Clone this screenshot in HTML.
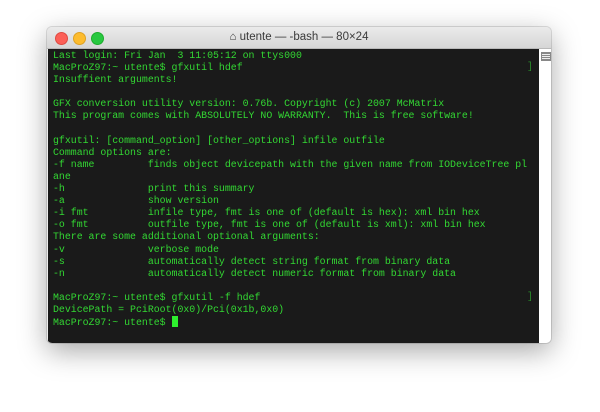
<!DOCTYPE html>
<html><head><style>
body{margin:0;width:600px;height:412px;background:#fff;position:relative;overflow:hidden;font-family:"Liberation Sans",sans-serif}
.win{position:absolute;left:47px;top:27px;width:504px;height:316px;border-radius:5px;background:#ececec;box-shadow:0 8px 28px rgba(0,0,0,.35),0 0 0 1px rgba(0,0,0,.12);overflow:hidden}
.title{height:21px;background:linear-gradient(#ebebeb,#d6d6d6);border-bottom:1px solid #b9b9b9;text-align:center;font-size:11.5px;color:#3a3a3a;line-height:21px}
.dot{position:absolute;top:5px;width:11px;height:11px;border-radius:50%}
.term{position:absolute;left:1px;top:22px;width:491px;height:294px;background:#1a1a1a}
.sb{position:absolute;left:492px;top:22px;width:12px;height:294px;background:#fff}
pre{margin:0;position:absolute;left:5px;top:1px;font-family:"Liberation Mono",monospace;font-size:9.9px;line-height:12.1px;color:#33d833}
.cur{display:inline-block;width:6px;height:11px;background:#2ef02e;vertical-align:-2px}
.br{position:absolute;right:6px;color:#2a8a2a;font-family:"Liberation Mono",monospace;font-size:10px}
</style></head><body>
<div class="win">
<div class="title">⌂ utente — -bash — 80×24</div>
<div class="dot" style="left:8px;background:#fc5f57;border:0.5px solid #de4a41"></div>
<div class="dot" style="left:26px;background:#fdbc2e;border:0.5px solid #dea123"></div>
<div class="dot" style="left:44px;background:#28c840;border:0.5px solid #1dac2c"></div>
<div class="term">
<pre>Last login: Fri Jan  3 11:05:12 on ttys000
MacProZ97:~ utente$ gfxutil hdef
Insuffient arguments!

GFX conversion utility version: 0.76b. Copyright (c) 2007 McMatrix
This program comes with ABSOLUTELY NO WARRANTY.  This is free software!

gfxutil: [command_option] [other_options] infile outfile
Command options are:
-f name         finds object devicepath with the given name from IODeviceTree pl
ane
-h              print this summary
-a              show version
-i fmt          infile type, fmt is one of (default is hex): xml bin hex
-o fmt          outfile type, fmt is one of (default is xml): xml bin hex
There are some additional optional arguments:
-v              verbose mode
-s              automatically detect string format from binary data
-n              automatically detect numeric format from binary data

MacProZ97:~ utente$ gfxutil -f hdef
DevicePath = PciRoot(0x0)/Pci(0x1b,0x0)
MacProZ97:~ utente$ <span class="cur"></span></pre>
<span class="br" style="top:13px">]</span>
<span class="br" style="top:243px">]</span>
</div>
<div class="sb"><div style="margin:3px 2px;width:8px;height:7px;border:1px solid #888;background:repeating-linear-gradient(#888 0 1px,#eee 1px 2px)"></div></div>
</div>
</body></html>
